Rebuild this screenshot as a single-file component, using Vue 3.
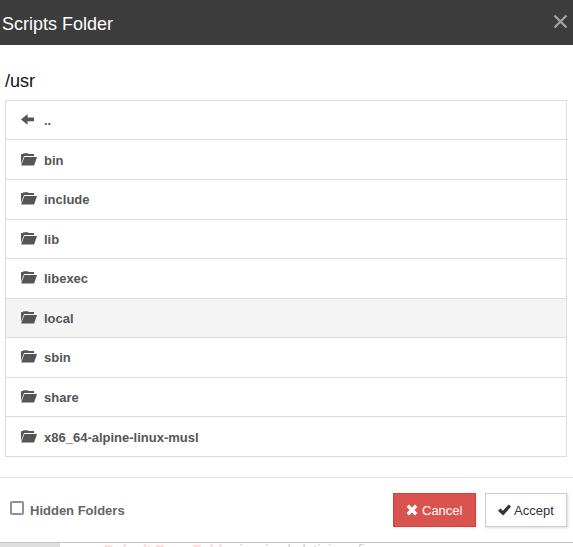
<script setup>
import { ref } from 'vue'

const folders = ['..', 'bin', 'include', 'lib', 'libexec', 'local', 'sbin', 'share', 'x86_64-alpine-linux-musl']
const active = ref('local')
const showHidden = ref(false)
</script>

<template>
  <div class="page">
    <section class="modal">
      <header class="head">
        <h4 class="title">Scripts Folder</h4>
        <button class="close" aria-label="Close">
          <svg width="15" height="15" viewBox="0 0 15 15"><path d="M1.5 1.5 13.5 13.5M13.5 1.5 1.5 13.5" /></svg>
        </button>
      </header>
      <main class="body">
        <div class="path">/usr</div>
        <ul class="list">
          <li v-for="name in folders" :key="name" class="row" :class="{ active: name === active }">
            <svg v-if="name === '..'" class="icon" width="16" height="14" viewBox="0 0 16 14">
              <path d="M0 6.4 6.6 1V4.6H13V8.3H6.6V11.8Z" />
            </svg>
            <svg v-else class="icon" width="16" height="14" viewBox="0 0 16 14">
              <path d="M0 11V1.6L.6 1H2L2.4 .2H7L7.5 1H13V3H3Z" />
              <path d="M3.4 4H16L13.1 12.4H.2Z" />
            </svg>
            <span class="name">{{ name }}</span>
          </li>
        </ul>
      </main>
      <footer class="foot">
        <label class="hidden-toggle">
          <input v-model="showHidden" type="checkbox" class="check" />
          <span class="toggle-text">Hidden Folders</span>
        </label>
        <div class="actions">
          <button class="btn cancel">
            <svg width="12" height="12" viewBox="0 0 12 12"><path d="M3 .6 6 3.6 9 .6 11.4 3 8.4 6 11.4 9 9 11.4 6 8.4 3 11.4 .6 9 3.6 6 .6 3Z" /></svg>
            <span class="cancel-text">Cancel</span>
          </button>
          <button class="btn accept">
            <svg width="13" height="12" viewBox="0 0 13 12"><path d="M0 6.8 2.5 4.5 4.9 6.8 10.7 .5 13 2.6 5.2 11.4Z" /></svg>
            <span class="accept-text">Accept</span>
          </button>
        </div>
      </footer>
    </section>
    <div class="behind">
      <div class="side"></div>
      <div class="hint"><b>Default Base Folder</b> <span>is mixed alatini config</span></div>
    </div>
  </div>
</template>

<style>
body {
  overflow: hidden;
  background: #fff;
}
</style>

<style scoped>
.page {
  width: 573px;
  height: 547px;
  overflow: hidden;
  font-family: "Liberation Sans", Arial, sans-serif;
  color: #111;
}
.modal {
  box-sizing: border-box;
  height: 543px;
  display: flex;
  flex-direction: column;
  background: #fff;
  border-bottom: 1px solid #c4c4c4;
}
.head {
  box-sizing: border-box;
  height: 45px;
  flex: none;
  display: flex;
  justify-content: space-between;
  align-items: flex-start;
  padding: 14px 5px 0 2px;
  background: #3c3c3c;
}
.title {
  margin: 0;
  font-size: 18px;
  line-height: 20px;
  font-weight: 400;
  color: #fff;
}
.close {
  padding: 0;
  border: 0;
  background: none;
  line-height: 0;
}
.close svg {
  fill: none;
  stroke: #a6a6a6;
  stroke-width: 2.2;
}
.body {
  box-sizing: border-box;
  height: 432px;
  padding: 26px 6px 0 5px;
}
.path {
  height: 29px;
  font-size: 18px;
  line-height: 20px;
}
.list {
  box-sizing: border-box;
  height: 357px;
  margin: 0;
  padding: 0;
  list-style: none;
  display: grid;
  grid-template-rows: 39px 40px 40px 39px 40px 39px 40px 39px 39px;
  border: 1px solid #ddd;
}
.row {
  box-sizing: border-box;
  display: flex;
  align-items: flex-start;
  padding: 12px 15px 0;
  border-bottom: 1px solid #ddd;
  color: #555;
}
.row:nth-child(2) {
  padding-top: 13px;
}
.row:last-child {
  padding-top: 13px;
  border-bottom: 0;
}
.row.active {
  background: #f4f4f4;
}
.icon {
  flex: none;
  fill: #555;
}
.name {
  margin-left: 7px;
  font-size: 13px;
  font-weight: 700;
  line-height: 15px;
}
.foot {
  box-sizing: border-box;
  height: 65px;
  display: flex;
  justify-content: space-between;
  padding: 15px 6px 0 10px;
  border-top: 1px solid #e5e5e5;
}
.hidden-toggle {
  display: flex;
  align-items: flex-start;
  padding-top: 8px;
}
.check {
  appearance: none;
  box-sizing: border-box;
  width: 14px;
  height: 14px;
  margin: 0 6px 0 0;
  border: 2px solid #8f8f9d;
  border-radius: 2px;
  background: #fff;
}
.toggle-text {
  font-size: 13px;
  font-weight: 700;
  line-height: 20px;
  color: #666;
}
.actions {
  display: flex;
  gap: 9px;
}
.btn {
  box-sizing: border-box;
  height: 34px;
  display: flex;
  align-items: center;
  padding: 0 0 0 12px;
  border: 1px solid #ccc;
  border-radius: 0;
  font: 13px/18px "Liberation Sans", Arial, sans-serif;
  color: #333;
  background: #fff;
  white-space: nowrap;
}
.btn svg {
  flex: none;
  fill: currentColor;
}
.btn span {
  padding-top: 2px;
}
.cancel {
  width: 83px;
  color: #fff;
  background: #d9534f;
  border-color: #d43f3a;
  box-shadow: 1px 1px 2px #eee;
}
.cancel-text {
  margin-left: 4px;
}
.accept {
  width: 82px;
  box-shadow: 1px 1px 2px #ddd;
}
.accept-text {
  margin-left: 3px;
}
.behind {
  display: flex;
  height: 4px;
  overflow: hidden;
}
.side {
  width: 60px;
  background: #dedede;
}
.hint {
  margin-top: -1px;
  padding-left: 44px;
  font-size: 14px;
  line-height: 17px;
  color: #ccc;
  white-space: nowrap;
}
.hint b {
  color: #fbdcdc;
}
</style>
